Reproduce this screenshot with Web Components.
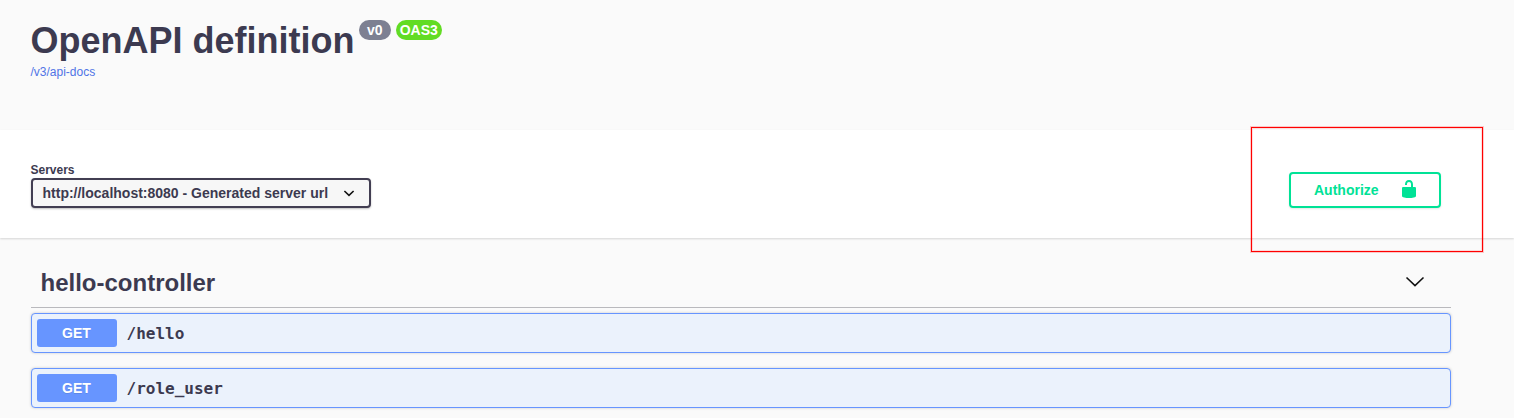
<!DOCTYPE html>
<html lang="en">
<head>
<meta charset="utf-8">
<title>OpenAPI definition</title>
<style>
html,body{margin:0;height:418px;overflow:hidden;background:#fafafa}
body{font-family:"Liberation Sans",Arial,sans-serif;color:#3c3a50}
</style>
</head>
<body>
<api-page></api-page>
<script>
function define(name, markup) {
  const template = document.createElement('template');
  template.innerHTML = '<style>*{box-sizing:border-box}</style>' + markup;
  customElements.define(name, class extends HTMLElement {
    constructor() {
      super();
      this.attachShadow({mode: 'open'}).append(template.content.cloneNode(true));
    }
  });
}

define('version-badge', `
<style>
:host{display:flex;align-items:center;justify-content:center;box-sizing:border-box;width:32px;height:20px;border-radius:10px;background:#7d8092;color:#fff;font:bold 14px/20px "Liberation Sans",Arial,sans-serif}
:host([oas]){width:46px;background:#62dc24}
</style><slot></slot>`);

define('api-header', `
<style>
:host{display:block;box-sizing:border-box;height:130px;padding:20px 31px 0 30.5px}
.title{display:flex;gap:5px;height:42px}
h1{margin:0 -.7px 0 0;font:bold 36px/41px "Liberation Sans",Arial,sans-serif;white-space:nowrap}
a{display:block;margin-top:3px;font-size:12px;line-height:14px;color:#5074e6;text-decoration:none}
</style>
<div class="title"><h1>OpenAPI definition</h1><version-badge>v0</version-badge><version-badge oas>OAS3</version-badge></div>
<a href="#">/v3/api-docs</a>`);

define('server-select', `
<style>
:host{display:block}
label{display:block;font:bold 12px/14px "Liberation Sans",Arial,sans-serif;margin:0 0 1px -.5px}
.box{display:flex;align-items:center;justify-content:space-between;width:340px;height:30px;padding:0 14px 0 9.5px;border:2px solid #423e52;border-radius:4px;background:#f7f7f7;box-shadow:0 1px 2px rgba(0,0,0,.25);font:bold 14px/26px "Liberation Sans",Arial,sans-serif;white-space:nowrap}
svg{display:block}
</style>
<label>Servers</label>
<div class="box"><slot></slot><svg width="12" height="8" viewBox="0 0 12 8"><path d="M1.4 2 6 6.3 10.6 2" fill="none" stroke="#111" stroke-width="1.6"/></svg></div>`);

define('authorize-button', `
<style>
:host{display:block;position:relative}
button{display:flex;align-items:center;width:152px;height:36px;margin:0;padding:0 22px 0 23px;border:2px solid #00e296;border-radius:4px;background:transparent;box-shadow:0 1px 2px rgba(0,0,0,.1);color:#00e296;font:bold 14px/17px "Liberation Sans",Arial,sans-serif;justify-content:space-between}
svg{display:block;margin-bottom:2px}
.mark{position:absolute;left:-38px;top:-45px;width:232px;height:125px;border:1px solid #f00;box-shadow:0 0 0 1px rgba(255,0,0,.2),inset 0 0 0 1px rgba(255,0,0,.12);pointer-events:none}
</style>
<button><slot></slot><svg width="16" height="20" viewBox="0 0 16 20"><path d="M13.8 8H12V5.6C12 2.703 10.665 1 8 1 5.334 1 4 2.703 4 5.6V6h2v-.801C6 3.754 6.797 3 8 3c1.203 0 2 .754 2 2.199V8H2.2C1.6 8 1 8.6 1 9.2v7.5c0 .6.5 1.3 1.1 1.5l1.2.4c.6.2 1.6.4 2.2.4h5c.6 0 1.6-.2 2.2-.4l1.2-.4c.6-.2 1.1-.9 1.1-1.5V9.2c0-.6-.6-1.2-1.2-1.2z" fill="currentColor"/></svg></button>
<div class="mark"></div>`);

define('scheme-bar', `
<style>
:host{display:flex;box-sizing:border-box;justify-content:space-between;height:108px;padding:33px 73px 0 31px;background:#fff;box-shadow:0 1px 2px rgba(0,0,0,.15)}
authorize-button{margin-top:9px}
</style>
<server-select>http://localhost:8080 - Generated server url</server-select><authorize-button>Authorize</authorize-button>`);

define('operation-row', `
<style>
:host{display:flex;align-items:center;box-sizing:border-box;height:40px;padding:5px;border:1px solid #6795ff;border-radius:4px;background:#ebf2fc;box-shadow:0 0 3px rgba(0,0,0,.19)}
.method{width:80px;height:28px;padding-right:1px;border-radius:3px;background:#6795ff;color:#fff;text-align:center;font:bold 14px/28px "Liberation Sans",Arial,sans-serif;text-shadow:0 1px 0 rgba(0,0,0,.1)}
.path{margin-left:9.5px;padding-top:2px;font:bold 16px/20px "DejaVu Sans Mono",monospace}
</style>
<span class="method">GET</span><span class="path"><slot></slot></span>`);

define('tag-section', `
<style>
:host{display:block;padding:20px 63px 0 31px}
header{display:flex;align-items:center;justify-content:space-between;height:50px;padding:0 26px 0 9.5px;border-bottom:1px solid #b9b9bd;margin-bottom:5px}
h3{margin:0;font:bold 24px/30px "Liberation Sans",Arial,sans-serif}
svg{display:block;margin-bottom:2px}
.rows{display:flex;flex-direction:column;gap:15px}
</style>
<header><h3><slot name="name"></slot></h3><svg width="20" height="12" viewBox="0 0 20 12"><path d="M1.5 1.5 10 9.6 18.5 1.5" fill="none" stroke="#111" stroke-width="1.6"/></svg></header>
<div class="rows"><slot></slot></div>`);

define('api-page', `
<style>:host{display:block}</style>
<api-header></api-header><scheme-bar></scheme-bar>
<tag-section><span slot="name">hello-controller</span><operation-row>/hello</operation-row><operation-row>/role_user</operation-row></tag-section>`);
</script>
</body>
</html>
